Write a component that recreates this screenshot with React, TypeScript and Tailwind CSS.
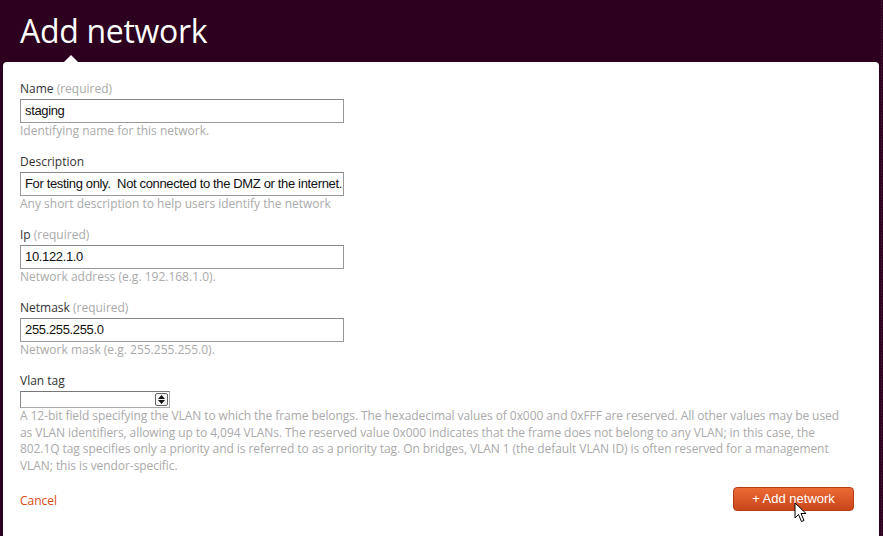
import type { ReactNode } from 'react'

const ui = { fontFamily: '"Open Sans", "DejaVu Sans", sans-serif' }
const arial = { fontFamily: '"Liberation Sans", Arial, sans-serif' }

function Field({ label, required, value, help }: { label: string; required?: boolean; value: string; help: string }) {
  return (
    <div className="mb-[14px]">
      <div className="h-[17px] text-[12px] leading-[17px] text-[#333]">
        {label}
        {required && <span className="text-[#aaa]"> (required)</span>}
      </div>
      <div
        className="mt-[2px] flex h-[24px] w-[324px] items-center overflow-hidden whitespace-pre border border-[#999] border-t-[#888] bg-white pl-[4px] text-[13px] tracking-[-0.35px] text-[#111]"
        style={arial}
      >
        {value}
      </div>
      <div className="h-[16px] text-[12px] leading-[16px] text-[#aaa]">{help}</div>
    </div>
  )
}

function Cursor() {
  return (
    <svg className="absolute left-[794px] top-[502px]" width="14" height="22" viewBox="0 0 14 22">
      <path d="M1 1 L1 16 L4.5 12.5 L7.5 19.5 L10 18.5 L7 11.5 L12 11.5 Z" fill="#fff" stroke="#000" strokeWidth="1" strokeLinejoin="round" />
    </svg>
  )
}

function Page({ children }: { children: ReactNode }) {
  return (
    <div className="relative h-[536px] w-[883px] overflow-hidden bg-[#2c001e]" style={ui}>
      {children}
    </div>
  )
}

export default function App() {
  return (
    <Page>
      {/* header */}
      <div className="flex h-[62px] items-center pl-[20px]">
        <h1 className="text-[32px] leading-none tracking-[-0.3px] text-white">Add network</h1>
      </div>

      {/* panel */}
      <div className="relative ml-[3px] mr-[4px] h-[474px] rounded-t-[4px] bg-white pl-[17px] pr-[25px] pt-[18px]">
        <div className="absolute left-[61px] top-[-7px] h-0 w-0 border-x-[7px] border-b-[7px] border-x-transparent border-b-white" />

        <Field label="Name" required value="staging" help="Identifying name for this network." />
        <Field label="Description" value="For testing only.  Not connected to the DMZ or the internet." help="Any short description to help users identify the network" />
        <Field label="Ip" required value="10.122.1.0" help="Network address (e.g. 192.168.1.0)." />
        <Field label="Netmask" required value="255.255.255.0" help="Network mask (e.g. 255.255.255.0)." />

        <div>
          <div className="h-[17px] text-[12px] leading-[17px] text-[#333]">Vlan tag</div>
          <div className="mt-[2px] flex h-[17px] w-[150px] border border-[#aaa] border-t-[#777] border-l-[#888] bg-white">
            <div className="flex-1" />
            <div className="my-[1px] mr-[1px] flex w-[13px] flex-col items-center justify-center gap-[1px] rounded-[2px] border border-[#666] bg-[#f4f4f4]">
              <svg width="7" height="4" viewBox="0 0 7 4"><path d="M3.5 0 L7 4 L0 4 Z" fill="#111" /></svg>
              <svg width="7" height="4" viewBox="0 0 7 4"><path d="M0 0 L7 0 L3.5 4 Z" fill="#111" /></svg>
            </div>
          </div>
          <p className="text-[12px] leading-[16.5px] tracking-[-0.07px] text-[#aaa]">
            A 12-bit field specifying the VLAN to which the frame belongs. The hexadecimal values of 0x000 and 0xFFF are reserved. All other values may be used
            <br />
            as VLAN identifiers, allowing up to 4,094 VLANs. The reserved value 0x000 indicates that the frame does not belong to any VLAN; in this case, the
            <br />
            802.1Q tag specifies only a priority and is referred to as a priority tag. On bridges, VLAN 1 (the default VLAN ID) is often reserved for a management
            <br />
            VLAN; this is vendor-specific.
          </p>
        </div>

        <div className="mt-[13px] flex items-center justify-between">
          <a className="mt-[3px] text-[12px] text-[#dd4814]">Cancel</a>
          <button
            className="h-[24px] w-[121px] rounded-[4px] border border-[#b73c13] bg-gradient-to-b from-[#ec6a33] to-[#c8461a] text-[13px] text-white"
            style={arial}
          >
            + Add network
          </button>
        </div>
      </div>

      {/* dotted right edge */}
      <div className="absolute right-0 top-0 h-full w-[3px] bg-[radial-gradient(#5a2048_1px,transparent_1px)] bg-[length:3px_3px]" />

      <Cursor />
    </Page>
  )
}
